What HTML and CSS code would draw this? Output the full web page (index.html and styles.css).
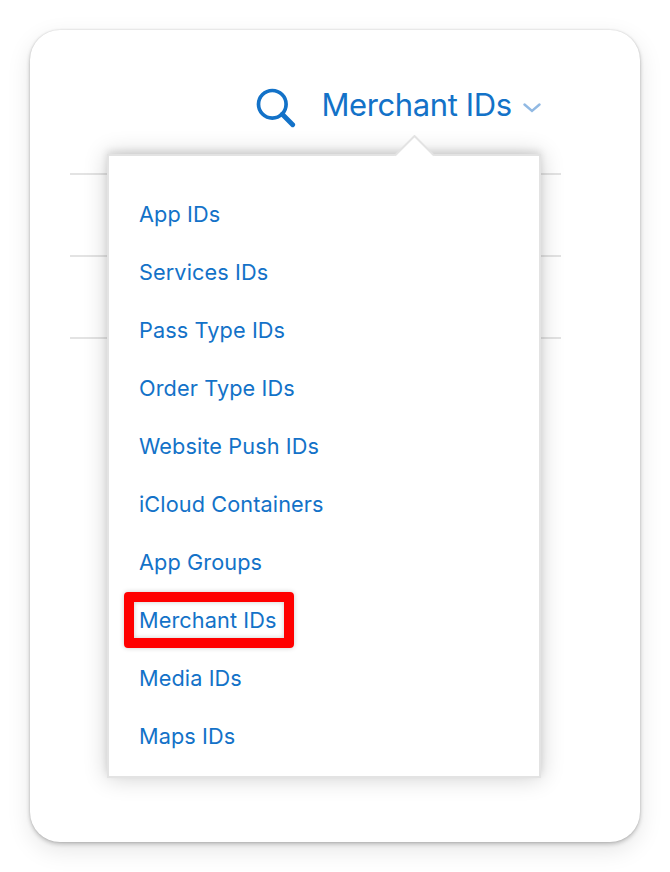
FILE: index.html
```html
<!DOCTYPE html>
<html lang="en">
<head>
<meta charset="utf-8">
<title>Identifiers</title>
<link rel="stylesheet" href="styles.css">
</head>
<body>
<main class="card">
  <header class="toolbar">
    <svg class="search" viewBox="0 0 42 42" aria-hidden="true"><circle cx="17.3" cy="18.3" r="13.8"/><path class="handle" d="M27.3 28.3L37.7 38.7"/></svg>
    <span class="title">Merchant IDs</span>
    <svg class="chevron" viewBox="0 0 18 12" aria-hidden="true"><path d="M1.5 2.5L9 9L16.5 2.5"/></svg>
  </header>
  <section class="content">
    <div class="rules"><hr><hr><hr></div>
    <nav class="menu">
      <svg class="arrow" viewBox="0 0 42 22" aria-hidden="true"><path class="fill" d="M1 22V20.5L20.5 1L40 20.5V22Z"/><path class="edge" d="M1 20.5L20.5 1L40 20.5"/></svg>
      <ul class="list">
        <li><a>App IDs</a></li>
        <li><a>Services IDs</a></li>
        <li><a>Pass Type IDs</a></li>
        <li><a>Order Type IDs</a></li>
        <li><a>Website Push IDs</a></li>
        <li><a>iCloud Containers</a></li>
        <li><a>App Groups</a></li>
        <li><a class="marked">Merchant IDs</a></li>
        <li><a>Media IDs</a></li>
        <li><a>Maps IDs</a></li>
      </ul>
    </nav>
  </section>
</main>
</body>
</html>
```
FILE: styles.css
```css
* { box-sizing: border-box; }
body { margin: 0; background: #fff; color: #1372c8; font-family: Inter, "Liberation Sans", sans-serif; font-weight: 400; }
.card { width: 610px; height: 812px; margin: 30px; border-radius: 30px; background: #fff; box-shadow: 0 2px 4px rgba(0,0,0,.22), 0 8px 24px rgba(0,0,0,.1), 0 0 2px rgba(0,0,0,.15); overflow: hidden; }
.toolbar { display: flex; height: 124px; padding: 56px 0 0 225px; }
.search { width: 42px; height: 42px; fill: none; stroke: #1372c8; stroke-width: 3.7; }
.handle { stroke-width: 4.8; stroke-linecap: round; }
.title { margin: -1px 0 0 24.5px; width: 191.5px; font-size: 31px; line-height: 40px; white-space: nowrap; letter-spacing: -.4px; }
.chevron { width: 18px; height: 12px; margin: 16px 0 0 9.5px; fill: none; stroke: #91b9e3; stroke-width: 2.4; stroke-linecap: round; stroke-linejoin: miter; }
.content { display: grid; }
.rules { grid-area: 1 / 1; margin: 19px 79px 0 40px; display: flex; flex-direction: column; gap: 80px; }
hr { width: 100%; height: 2px; margin: 0; border: 0; background: #e3e3e3; }
.menu { grid-area: 1 / 1; position: relative; width: 434px; height: 624px; margin-left: 77px; padding: 29px 0 0 30px; border: 2px solid #e3e3e3; background: #fff; box-shadow: 0 0 22px rgba(0,0,0,.19), 0 -3px 7px rgba(0,0,0,.1); }
.arrow { position: absolute; left: 285px; top: -21px; width: 42px; height: 22px; }
.fill { fill: #fff; }
.edge { fill: none; stroke: #e3e3e3; stroke-width: 2; }
.list { margin: 0; padding: 0; list-style: none; }
li { height: 58px; display: flex; align-items: center; font-size: 21.7px; letter-spacing: .1px; }
.marked { width: 170px; margin-left: -15px; padding: 5px; border: 10px solid #f00; line-height: 26px; border-radius: 4px; white-space: nowrap; box-shadow: 0 0 5px rgba(0,0,0,.2), inset 0 0 5px rgba(0,0,0,.2); }
```
